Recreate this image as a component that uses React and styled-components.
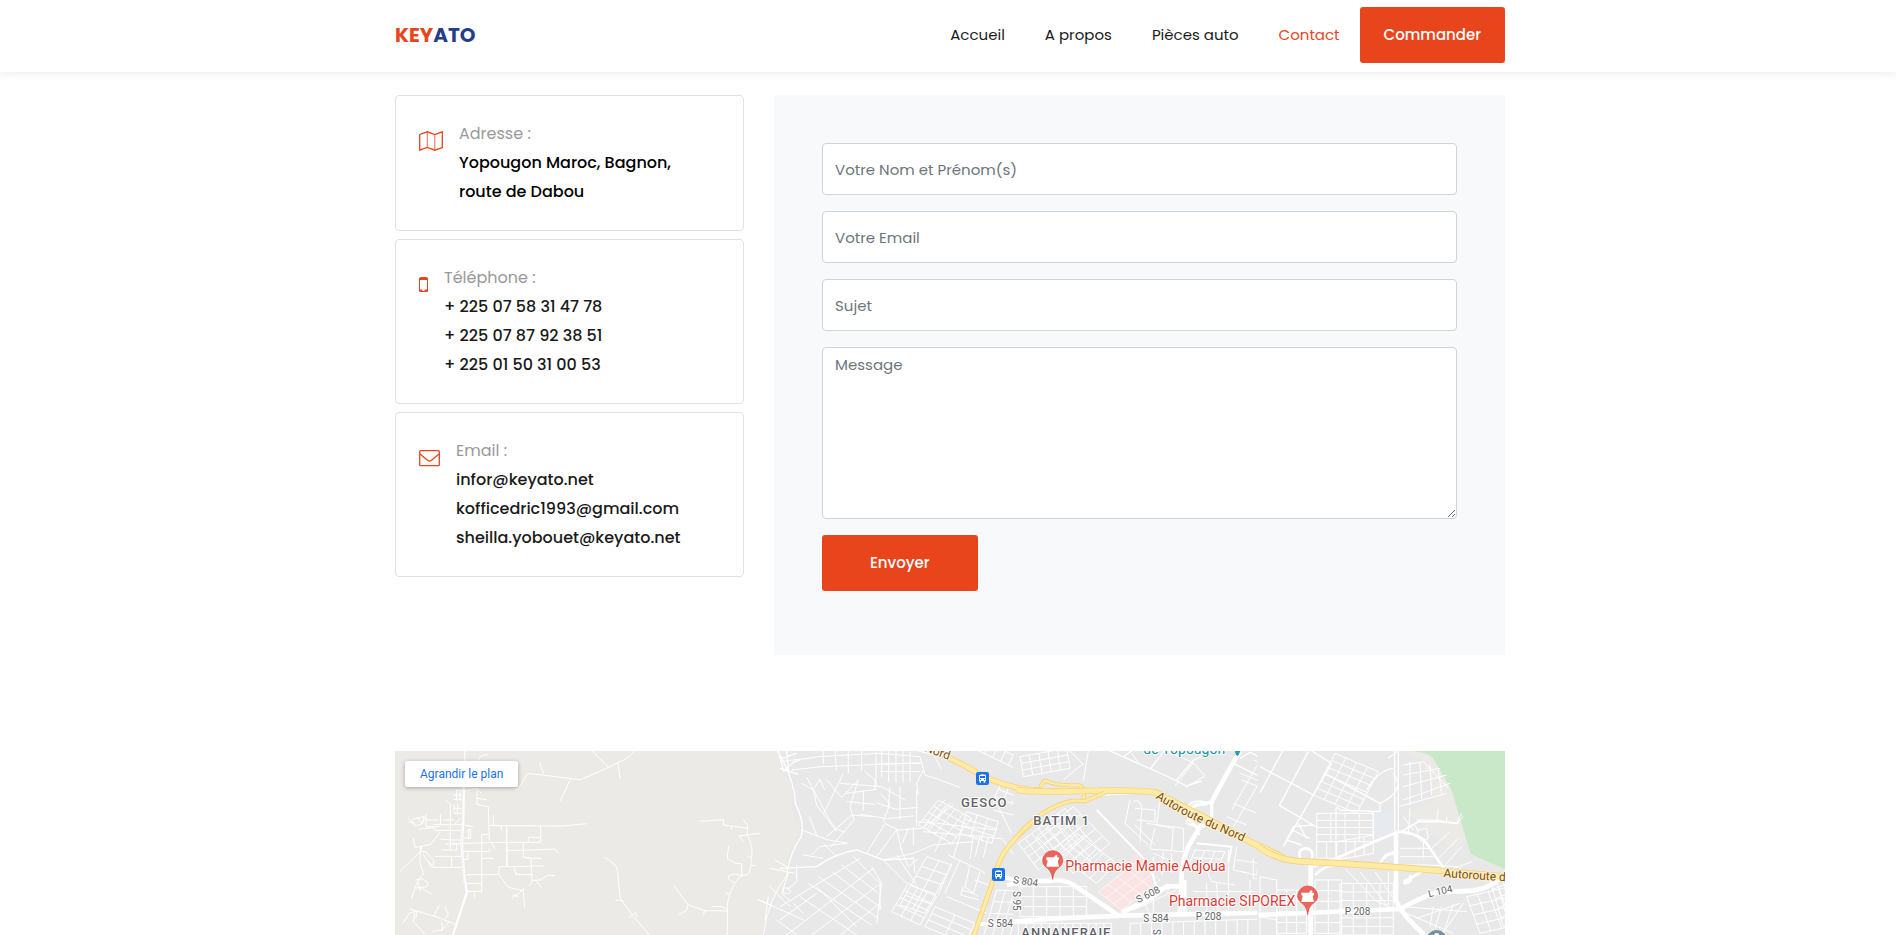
import React from "react";
import styled, { createGlobalStyle, css } from "styled-components";

const brand = "#e9451c";

const GlobalStyle = createGlobalStyle`
  *, *::before, *::after { box-sizing: border-box; }
  body {
    margin: 0;
    background: #fff;
    color: #1a1a1a;
    font-family: Poppins, Inter, "Liberation Sans", sans-serif;
    font-size: 16px;
  }
`;

const Page = styled.div`
  display: flex;
  flex-direction: column;
  min-height: 100vh;
`;

const container = css`
  width: 100%;
  max-width: 1140px;
  margin: 0 auto;
  padding: 0 13px 0 17px;
`;

const Header = styled.header`
  background: #fff;
  box-shadow: 0 0 10px rgba(0, 0, 0, 0.1);
`;

const HeaderInner = styled.div`
  ${container}
  display: flex;
  align-items: center;
  justify-content: space-between;
  flex-wrap: wrap;
  min-height: 72px;
  padding-bottom: 2px;
`;

const Logo = styled.a`
  color: #233d8a;
  font-size: 20px;
  font-weight: 700;
  text-decoration: none;
  span { color: ${brand}; }
`;

const Nav = styled.nav`
  display: flex;
  align-items: center;
  flex-wrap: wrap;
`;

const NavLink = styled.a`
  padding: 0 20px;
  color: ${(p) => (p.$active ? brand : "#1a1a1a")};
  font-size: 15px;
  line-height: 24px;
  text-decoration: none;
`;

const Button = styled.button`
  height: 56px;
  padding: 0 ${(p) => (p.$wide ? 48 : 24)}px;
  border: 0;
  border-radius: 3px;
  background: ${brand};
  color: #fff;
  font: 500 15px/24px Poppins, Inter, sans-serif;
  cursor: pointer;
`;

const Contact = styled.main`
  ${container}
  display: grid;
  grid-template-columns: 349fr 731fr;
  gap: 30px;
  padding-top: 23px;
  padding-bottom: 96px;
  @media (max-width: 900px) { grid-template-columns: 1fr; }
`;

const Cards = styled.div`
  display: flex;
  flex-direction: column;
  gap: 8px;
`;

const Card = styled.section`
  display: flex;
  gap: 16px;
  padding: 23px 23px 24px;
  border: 1px solid #dee2e6;
  border-radius: 4px;
`;

const CardIcon = styled.svg`
  flex: none;
  width: ${(p) => p.$width}px;
  height: 20px;
  margin-top: 12px;
  fill: none;
  stroke: ${brand};
`;

const CardText = styled.div`
  line-height: 29px;
  font-weight: 500;
`;

const CardLabel = styled.div`
  color: #999;
  font-weight: 400;
`;

const Line = styled.div`
  color: ${(p) => (p.$dark ? "#000" : "#1a1a1a")};
`;

const Form = styled.form`
  display: flex;
  flex-direction: column;
  align-items: flex-start;
  gap: 16px;
  padding: 48px 48px 64px;
  background: #f8f9fb;
`;

const field = css`
  display: block;
  width: 100%;
  border: 1px solid #ced4da;
  border-radius: 4px;
  background: #fff;
  color: #495057;
  font: 400 15px/22px Poppins, Inter, sans-serif;
  &::placeholder { color: #6c757d; opacity: 1; }
`;

const Input = styled.input`
  ${field}
  height: 52px;
  padding: 0 12px;
`;

const Message = styled.textarea`
  ${field}
  height: 172px;
  padding: 6px 12px;
  resize: vertical;
`;

const MapSection = styled.section`
  ${container}
  display: flex;
  flex: 1 0 184px;
`;

const MapFrame = styled.div`
  position: relative;
  flex: 1;
  height: max(184px, calc(100vh - 751px));
  overflow: hidden;
  background: #ebeae6;
`;

const MapDrawing = styled.svg`
  display: block;
  width: 100%;
  height: 100%;
  font-family: Roboto, sans-serif;
`;

const MapLink = styled.a`
  position: absolute;
  top: 10px;
  left: 10px;
  padding: 0 15px;
  border-radius: 2px;
  background: #fff;
  box-shadow: 0 1px 4px rgba(0, 0, 0, 0.3);
  color: #1a73e8;
  font: 400 12px/26px Roboto, sans-serif;
  text-decoration: none;
`;

const Streets = styled.path`
  fill: none;
  stroke: #fff;
  stroke-width: ${(p) => p.$w || 3};
  stroke-linejoin: round;
`;

const MapText = styled.text`
  font-size: ${(p) => p.$size || 30}px;
  font-weight: ${(p) => p.$weight || 400};
  fill: ${(p) => p.$color || "#5f6368"};
  stroke: ${(p) => p.$halo || "#fff"};
  stroke-width: 6px;
  stroke-linejoin: round;
  paint-order: stroke;
`;

const District = styled(MapText)`
  font-size: 39px;
  font-weight: 500;
  letter-spacing: 3px;
`;

const Tile = ({ x, children }) => (
  <g transform={`translate(${x} -11) scale(0.33333)`}>{children}</g>
);

// A block of streets: rows run along u, columns along v, from the corner (x, y).
const block = (x, y, u, v, rows, cols) => {
  let d = "";
  for (let i = 0; i <= rows; i++) {
    const t = i / rows;
    d += `M${x + v[0] * t} ${y + v[1] * t}l${u[0]} ${u[1]}`;
  }
  for (let i = 0; i <= cols; i++) {
    const t = i / cols;
    d += `M${x + u[0] * t} ${y + u[1] * t}l${v[0]} ${v[1]}`;
  }
  return d;
};

const Highway = ({ d, w = 18 }) => (
  <g fill="none" strokeLinejoin="round">
    <path d={d} stroke="#f8d27a" strokeWidth={w} />
    <path d={d} stroke="#ffeba3" strokeWidth={w - 5} />
  </g>
);

const BusStop = ({ x, y }) => (
  <g transform={`translate(${x} ${y})`}>
    <rect width="39" height="39" rx="6" fill="#1a73e8" />
    <path
      fill="#fff"
      fillRule="evenodd"
      d="M9 12q0-5 10.500-5t10.500 5v15h-2v5h-5v-5h-8v5h-4v-5h-2zM12 12v6h15v-6zM12 21v3h3v-3zM24 21v3h3v-3z"
    />
  </g>
);

const Pharmacy = ({ x, y }) => (
  <g transform={`translate(${x} ${y})`}>
    <path
      d="M0 0C-3-22-9-28-18-35C-25-41-30-47-30-56A30 30 0 0 1 30-56C30-47 25-41 18-35C9-28 3-22 0 0z"
      fill="#ec655c"
      stroke="#d8453d"
      strokeWidth="2"
    />
    <path d="M-19-66H4l6-8 5 3-3 5h7v7l-4 3 4 18H-19l4-18-4-3z" fill="#fff" />
  </g>
);

const RuralTile = () => (
  <Tile x={-5}>
    <Streets
      $w={3}
      d="M225 33L222 100M265 62q2-18 30-18M375 150l10-2L412 100l160 19 84-37 26-13q35-14 52-36M606 33l49 48M449 69l12 34M541 119l-31 65M684 69l6 47
      M225 153l36-8 14 16M261 145v48l34 8 3 100M261 175l30 4M167 182l14 8v140M198 150h22M190 165h30M200 150v32M210 150v32M190 178h30M192 192v30M203 190v34M192 205h26M192 220h24
      M55 235l12 10 8 12 22-5 5-22-35 8M82 232l15 20 12-30M75 250l-20-5M108 230v30h40M108 240h38M85 268l45-5 5 8h85M152 222v32M152 275l-30 38-22 5-25 5-5-28M130 254h90l30 7M160 240h30M210 235l-15 17M235 268v28M222 293l20 2v-28l-10 5
      M150 297l35 3h35M30 394l60-58 5-18M95 318l-5 20v30l10 33-18 25-18 50M92 335h14l25 27v17l-20-17-12-20M112 362l13 20h95M135 349h80M185 349v33M155 330h45v-18l-20-2M165 312h50
      M78 420l20-4 16 12-3 12-32 4M90 442l35 20M84 425l7 30M298 256l50 1 170 1 72-7M310 225v31l24 2v15M350 257v120M350 267l2 110M452 258v48M415 306v-14h37M218 310l80-2 70-1h84M275 283h22M275 283v172M215 334h83v-8M305 308l10 18M222 358h12v-22M275 355h36M350 331h50l95-4 11 12M400 308v44l25 2M425 355h30M400 352l23 3 3 65M422 378h40M327 380h45l55-1M372 380l6 24h50M327 380v24l28 38 45 10 4 50M230 404h97M230 430h45M228 454h48M254 456v16M366 474l22-15 15-14M385 470l-18-6M425 422l28-2 18-14h24M440 423l14 20M420 436l10-18
      M38 550l20-30 20-8M58 506l80 24 60 24M132 530l16-35M165 500l10 22-10 15M75 515l-5 30 35 38M125 575l30-5 25-27M155 545l3 28M82 515l-5 20
      M643 352q32 16 39 36l9 88 34 46 53 63M676 481l20-1 5 6M718 532l19-14 4 13
      M851 436l43 58 50 18 68 1M866 524l23-12 5-18M940 525l4-13M967 500h30l13 8M930 244l70-5v16l72 10M1025 258v12M1060 240l13 16-1 28q20 40 12 75-1 40-12 45l-20 3M1045 288l65-8M1060 305l-13-18M1072 350l12 2M1082 376h15M1018 315q-8 32-5 42 22 16 42 15v35M1055 407q-25-10-40 2-2 14 18 18M1060 405q-35 20-48 85v95l-6 0M1007 458l12 4"
    />
    <Streets $w={8} d="M221 142l-2 100-4 70 7 96 8 50-42 127" />
    <path d="M218 155l-3 150 5 100 6 50-42 130" fill="none" stroke="#dcdcdb" strokeWidth="1" />
    <Streets d="M1155 360l45 25M1105 478l95 45M1200 410q-60 75-46 150l6 25" />
  </Tile>
);

const WestTile = () => (
  <Tile x={385}>
    <path
      d="M-8 33H900V600H-50l-3-30L-20 480 0 450l25-50-5-40 20-40 22-60-20-20-12-110L0 70z"
      fill="#e8e8e8"
    />
    <Streets d="M-8 33q50 80 55 160 30 60 15 100-30 40-42 110M-5 33l16 60 28-25 22-10M0 85l55 18M20 33l5 60M5 55l45-15" $w={4} />
    <Streets d="M-30 385l75 15M-68 478l140 62M25 400q-60 75-75 185M-30 440l60 60M-10 540l60 45M-35 470l-10 70" />
    <Streets
      d="M0 65l85-10 30-5 180-10 125 10M35 90l90-10 300-12M130 33v40M165 33l5 58M205 33v66M245 33v60M288 35v105M305 33v80M326 33v92M348 33v95M369 33v95M390 35v92M290 72l130-2M300 95h120M255 95l30 25v30M420 50l15 55 45 15 60 22M430 90l-20 40 5 35M415 33l60 15M455 33l30 55
      M65 130l35 20 10 45 60 80M80 112l70 130 15 20M100 150l20-32 14 32M140 120l45 52 50-52M190 100l-38 78-20 40M235 120l-25 80 12 40-70 82M180 130l125 10 70 40M200 160l90-12M200 185l85 8M250 150v62M330 140l-5 60M360 140v100M410 150v110M288 188l60 20 68-6M240 222l80 14 80-8
      M65 270l80 30 60 10M88 230l24 60M140 290l75-65 70 5M165 265l25 10M95 345l25-25 80-10M130 310l35 35M70 345l60 10M310 360l90-20 60-25 120-10M260 340l55-90 40 20 70-5 95-70M290 350l60-80M310 245l20-55-30-30M350 270l15 60M385 265l-18 45M400 260v55M430 265l40-60 25-25M445 275l65-85M465 250l-50-5"
    />
    <Streets
      d="M25 400l-20 60 28 25M50 375v50l-30 25M10 445q18-5 20 8t-20 5zM360 320l25 60 30-25M350 345l60 90M400 350l5 50M310 360l70 70M0 500l240-145M20 585l260-200M60 470l170 115M85 430l190 125M115 410l180 125M155 395l150 110M185 375l110 85M70 520l-30-30M95 585l200-150M180 585l120-95M220 350l80 80v80M275 380l30 50-15 120M0 540l110-80M110 440l120 120"
    />
    <Streets $w={4} d="M0 385l110-5q60-42 120-50l80 30 90-5" />
    <Streets d={block(440, 350, [75, 25], [-80, 145], 5, 2) + block(385, 430, [85, 40], [-50, 85], 4, 3) + block(465, 500, [120, 50], [-30, 60], 3, 2)} />
    <Streets
      d="M505 345l95 45 15 10M515 370l-40 95M540 360l-45 100M570 375l-15 65 40 30M600 395l-20 65-35-10M500 470l120 50M585 420l40 15M550 440l-8 25 55 15M430 275l150 12 90 10M580 287l-10 70M540 285l-20 70M490 280l-25 55M600 290l-15 60M625 292l-15 60M470 250l180 20"
    />
    <Streets d={block(475, 180, [100, 55], [-60, 75], 4, 4) + block(560, 215, [95, 30], [-20, 65], 3, 3) + block(590, 30, [190, 90], [30, -60], 2, 8) + block(665, 125, [100, 40], [-20, 45], 2, 4) + block(720, 270, [80, 130], [60, -30], 3, 9)} />
    <Streets d={block(650, 450, [130, 5], [-40, 140], 4, 5) + "M690 130l90 100M640 210l100 25 40-60M670 300l70 100M700 280l80 100M655 200l40 80"} />
    <Streets $w={12} d="M645 405l60 15 75 15M710 430v155M600 552h180" />
  </Tile>
);

const CentreTile = () => (
  <Tile x={625}>
    <path d="M-20 33H780V600H-20z" fill="#e8e8e8" />
    <path d="M345 338l35 25 25 65-100 85-75-55 85-65z" fill="#f9e3e3" />
    <Streets d={block(0, 50, [140, -25], [10, 60], 3, 5) + block(-5, 310, [140, -105], [60, 80], 4, 7) + block(160, 200, [110, 110], [-110, 90], 4, 5) + block(110, 340, [120, 90], [60, -60], 2, 6)} />
    <Streets d={block(0, 440, [200, 0], [0, 90], 3, 5) + block(-5, 550, [280, 0], [0, 40], 1, 12) + block(330, 550, [450, -15], [0, 50], 1, 14) + block(525, 330, [90, 5], [-20, 45], 2, 3)} />
    <Streets $w={2} d={block(235, 455, [115, -90], [70, 55], 3, 4)} />
    <Streets $w={4} d="M270 33l170 75 60 30 45-15M335 33l-25 18M390 88l42-55M470 120l50-60 25-10M640 70l140 70M660 55l30-18 90 45" />
    <Streets
      d="M205 33l-15 90M190 70l-60 50M150 33l40 40M335 40l25 35M440 33l80 35-55 70M520 68l35 40-60 35M700 60l80 40M740 90l-100 170M720 60l-85 150M665 120l75 30M640 190l70 30M620 230l60 25M660 100l90 35M750 60v40
      M250 165l110-5M330 180l-15 70 70 65M345 205l60 5v35l-55-5M340 185q20-12 25 20l-5 100M380 250l110 15v70l-100-8M420 180l-10 75 50 10-5 65M405 265l-15 60M345 255l60 60M400 340l70 30M400 350v60M430 335l-5 70M455 340v60M340 510l130-60M400 460v65M440 455l40 30M370 480l20 45
      M510 390l50 0 15 35 70 10M530 350l10 40M650 320l-10 70 70 15 10-60M650 360l70 10M625 330v200M700 355v60l80 10M560 430v100M590 430l5 95M690 420v100M740 410v110M520 455h250"
    />
    <Streets $w={6} d="M230 210l145 150 25 50M530 310l105 10-10 45M495 335q15-45 45-55M400 410q5 45 50 35M520 230q-35-20-5-42 30-10 50 5M510 230q-25 25 15 25" />
    <Streets $w={14} d="M-40 435q80-15 125-12 55-10 95 25 60 40 120 82M-20 545l130-10 200-8 470-10M305 518l90-45 45-35 40 2M660 33q-70 120-88 160M480 530l5-130q5-50 20-80l40-70" />
    <Streets $w={10} d="M575 185v60l-40 20q-35-25-28-50 12-25 45-22zM495 420v110" />
    <Highway w={12} d="M190 180q8-40-15-45-60 5-100-13-15 10-10 22" />
  </Tile>
);

const EastTile = () => (
  <Tile x={865}>
    <path d="M-8 33H800V600H-8z" fill="#e8e8e8" />
    <path d="M440 33h80l50 100 50 170-35 30-140-110 80-40-20-80z" fill="#ebeae6" opacity=".8" />
    <path d="M455 33q60 5 70 32l50 85 57 192 105 47V33z" fill="#c8e8c8" />
    <path d="M342 225l57-8v58l-57 20z" fill="#e7ebef" />
    <Streets d={block(225, 40, [130, 55], [-65, 125], 6, 4) + block(170, 220, [170, 0], [0, 85], 4, 4) + block(170, 305, [60, 0], [0, 50], 1, 2) + block(230, 305, [110, -20], [0, 55], 1, 4)} />
    <Streets
      $w={4}
      d="M0 80l160 85M68 33L0 158M145 35L58 196l112 65M215 70L70 320M155 33l60 37M85 125l35 18M230 200l10 10 120 5v-25l-165-90M360 190q80-40 40-90M404 33v240M415 33v240M228 355V205M340 215v80M70 320l30-60 60-5M95 270l55 25M115 250l25 45M80 300l45 15M385 55l25-20M320 150q35-60 80-65"
    />
    <Streets
      d={"M430 75l60-10 75 80M430 105l110-20M430 140l130-35M430 180l140-50M415 200l145-40M450 65v130M480 68l5 110M510 75l5 90M535 90l10 70M430 230l30 40M450 205l-5 80M470 240h60l60 10 20-20M530 243l5-35M560 250v-20M590 250l15-30M475 275l-10-20M470 290l5-20 25-5 5 30-20 10zM510 330l60-55M535 355l60-60M555 375l50-55M570 390l65-25M585 410l20-30M420 325h90M420 350h100M490 305v50M415 375l90 0 90 5" +
        block(240, 430, [160, 0], [0, 155], 6, 4) + block(50, 450, [90, 0], [0, 130], 4, 3) + block(165, 420, [80, 0], [0, 160], 5, 2) + block(0, 410, [50, 10], [0, 180], 3, 1)}
    />
    <Streets d={"M255 385l90 95 60 30M300 395l80 100M345 395l55 80M385 395v100M430 500l190 15M440 520l140 60M470 535l130-45M580 490l-30 90M610 490l-65 95M520 500l-10 60M545 500l-20 65" + block(620, 470, [130, -30], [40, 110], 4, 4) + block(690, 420, [50, -20], [40, 140], 5, 3)} />
    <Streets $w={8} d="M228 355l185-80q70 5 90 40l55 80M150 385q40-20 95-35M165 405q20-25 60-30M120 355q-8-30 20-30 25 5 15 38M365 365q5-25 40-25M360 370q10-25 45-35M430 425q50-25 60-35M450 405q10 25-20 25" />
    <Streets $w={5} d="M415 280l60-35h60l60 5" />
    <Streets $w={14} d="M408 280v200q10 35 85 105M-5 525l425-18q65-35 110-50l110-5q60-10 85-45M152 370v215" />
    <path d="M500 600a29 29 0 1 1 60 0z" fill="#78909c" />
    <circle cx="530" cy="587" r="8" fill="#fff" />
  </Tile>
);

const MapArtwork = () => (
  <MapDrawing viewBox="0 0 1110 184" preserveAspectRatio="xMidYMin slice" role="img" aria-label="Plan">
    <defs>
      <path id="autoroute" d="M406 174C480 225 560 258 700 318" />
    </defs>
    <RuralTile />
    <WestTile />
    <CentreTile />
    <EastTile />
    <Tile x={385}>
      <Highway d="M465 33L560 80Q670 150 785 151" />
      <Highway d="M580 590l60-170q5-30 30-80 45-65 110-105" w={15} />
    </Tile>
    <Tile x={625}>
      <Highway d="M-10 150q80 8 190 3 200-5 230 6 150 75 290 152 50 20 90 42" w={20} />
      <Highway d="M-10 290q80-90 165-107h40l60-25" w={13} />
    </Tile>
    <Tile x={865}>
      <Highway d="M-5 320q60 45 145 45 200 10 410 28l200 18" w={20} />
    </Tile>
    <Tile x={385}>
      <MapText x="432" y="33" transform="rotate(20 432 33)" $color="#7c4a0b" $size={36}>Nord</MapText>
      <District x="543" y="200">GESCO</District>
      <MapText x="698" y="429" transform="rotate(8 698 429)">S 804</MapText>
      <MapText x="699" y="453" transform="rotate(90 699 453)">S 95</MapText>
      <MapText x="623" y="561">S 584</MapText>
      <District x="724" y="591">ANNANERAIE</District>
      <BusStop x={588} y={96} />
      <BusStop x={636} y={384} />
    </Tile>
    <Tile x={625}>
      <MapText x="370" y="43" $size={42} $color="#1a93a0">de Yopougon</MapText>
      <path d="M645 33h16l-4 10-5 6-5-6z" fill="#1aa3b0" />
      <District x="40" y="256">BATIM 1</District>
      <MapText $size={36} $color="#7c4a0b" $halo="#fff3cf">
        <textPath href="#autoroute">Autoroute du Nord</textPath>
      </MapText>
      <Pharmacy x={98} y={418} />
      <MapText x="136" y="393" $size={42} $color="#db3b35">Pharmacie Mamie Adjoua</MapText>
      <MapText x="355" y="490" transform="rotate(-27 355 490)">S 608</MapText>
      <MapText x="370" y="546">S 584</MapText>
      <MapText x="527" y="541">P 208</MapText>
      <MapText x="399" y="567" transform="rotate(90 399 567)">S 95</MapText>
      <MapText x="447" y="498" $size={42} $color="#db3b35">Pharmacie SIPOREX</MapText>
    </Tile>
    <Tile x={865}>
      <Pharmacy x={143} y={524} />
      <MapText x="254" y="524">P 208</MapText>
      <MapText x="507" y="472" transform="rotate(-13 507 472)">L 104</MapText>
      <MapText x="550" y="411" transform="rotate(4 550 411)" $size={36} $color="#7c4a0b" $halo="#fff3cf">Autoroute du Nord</MapText>
    </Tile>
  </MapDrawing>
);

const navItems = ["Accueil", "A propos", "Pièces auto", "Contact"];
const phones = ["+ 225 07 58 31 47 78", "+ 225 07 87 92 38 51", "+ 225 01 50 31 00 53"];
const emails = ["infor@keyato.net", "kofficedric1993@gmail.com", "sheilla.yobouet@keyato.net"];

export default function App() {
  return (
    <Page>
      <GlobalStyle />
      <Header>
        <HeaderInner>
          <Logo href="#"><span>KEY</span>ATO</Logo>
          <Nav>
            {navItems.map((item) => (
              <NavLink key={item} href="#" $active={item === "Contact"}>{item}</NavLink>
            ))}
            <Button type="button">Commander</Button>
          </Nav>
        </HeaderInner>
      </Header>

      <Contact>
        <Cards>
          <Card>
            <CardIcon $width={24} viewBox="0 0 24 20" aria-hidden="true">
              <path d="M.7 3.500L8.300.8l7.500 2.700L23.300.8v15.700l-7.500 2.700-7.500-2.700L.7 19.200z" strokeWidth="1.300" />
              <path d="M8.300 1v15.500M15.800 3.500V19" strokeWidth=".8" />
            </CardIcon>
            <CardText>
              <CardLabel>Adresse :</CardLabel>
              <Line $dark>Yopougon Maroc, Bagnon,</Line>
              <Line $dark>route de Dabou</Line>
            </CardText>
          </Card>
          <Card>
            <CardIcon $width={9} viewBox="0 0 9 20" aria-hidden="true">
              <rect x=".5" y="2.500" width="8" height="14" rx="1" />
              <path d="M0 4h9M0 15.500h3.500M5.500 15.500H9" strokeWidth="2" />
            </CardIcon>
            <CardText>
              <CardLabel>Téléphone :</CardLabel>
              {phones.map((p) => <Line key={p}>{p}</Line>)}
            </CardText>
          </Card>
          <Card>
            <CardIcon $width={21} viewBox="0 0 21 20" aria-hidden="true">
              <rect x=".7" y="2.700" width="19.600" height="15" rx="1" strokeWidth="1.300" />
              <path d="M1 6l7.500 6.200q2 1.500 4 0L20 6" strokeWidth="1.300" />
            </CardIcon>
            <CardText>
              <CardLabel>Email :</CardLabel>
              {emails.map((e) => <Line key={e}>{e}</Line>)}
            </CardText>
          </Card>
        </Cards>

        <Form onSubmit={(e) => e.preventDefault()}>
          <Input type="text" placeholder="Votre Nom et Prénom(s)" aria-label="Votre Nom et Prénom(s)" />
          <Input type="email" placeholder="Votre Email" aria-label="Votre Email" />
          <Input type="text" placeholder="Sujet" aria-label="Sujet" />
          <Message placeholder="Message" aria-label="Message" />
          <Button type="submit" $wide>Envoyer</Button>
        </Form>
      </Contact>

      <MapSection>
        <MapFrame>
          <MapArtwork />
          <MapLink href="#">Agrandir le plan</MapLink>
        </MapFrame>
      </MapSection>
    </Page>
  );
}
